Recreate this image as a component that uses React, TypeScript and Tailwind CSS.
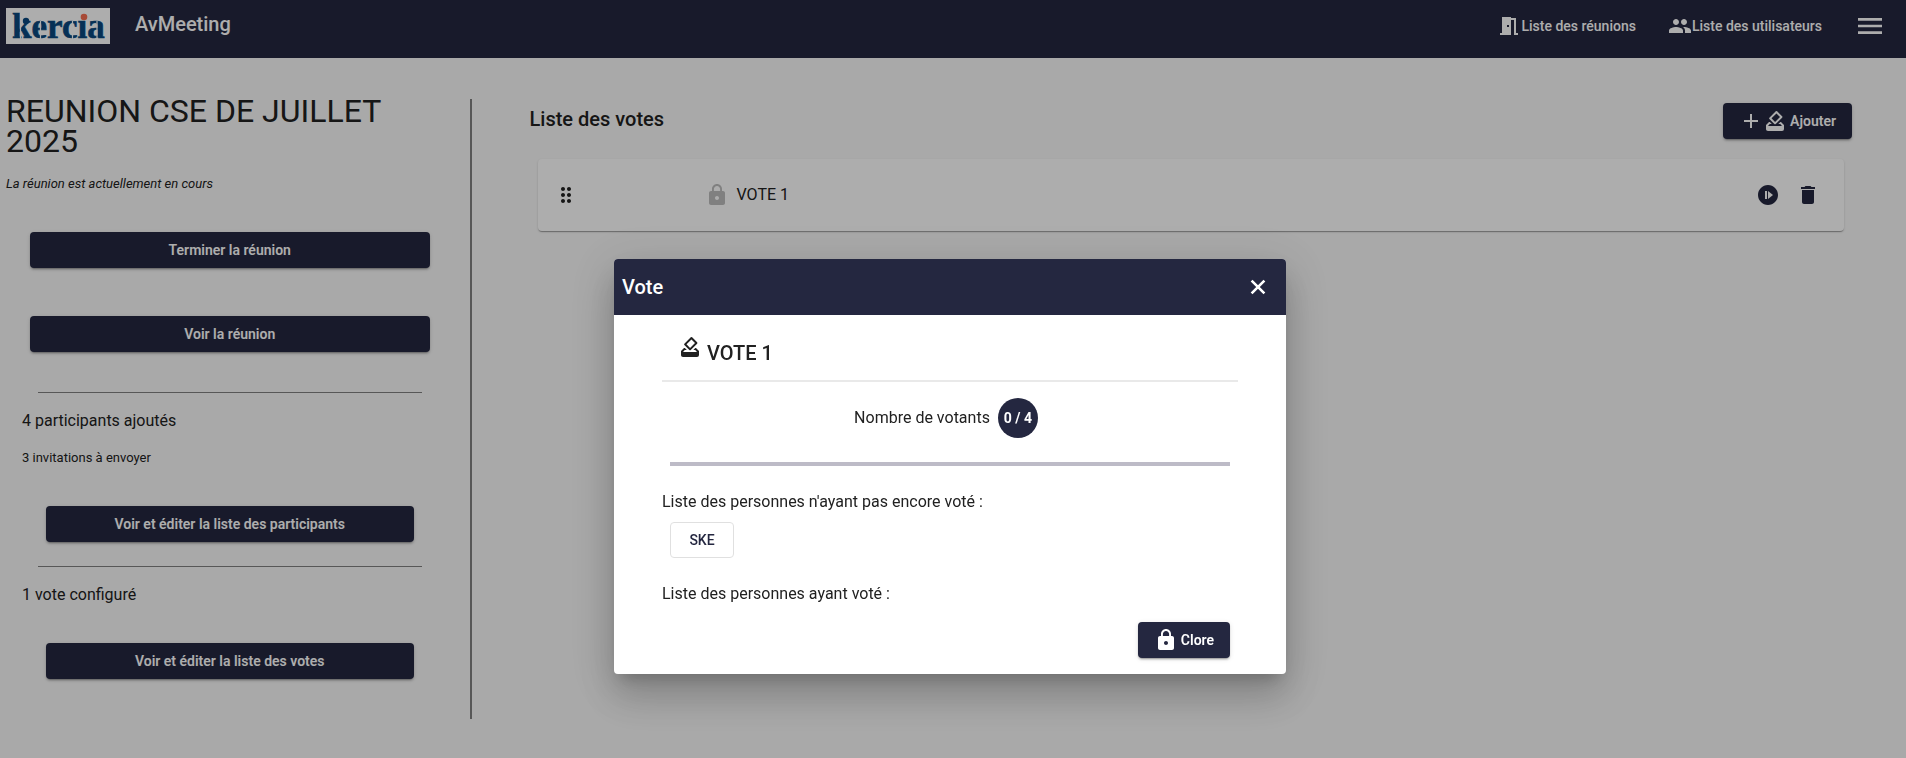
import React, { useState } from 'react';
import {
  MdAdd,
  MdDelete,
  MdDragIndicator,
  MdGroup,
  MdHowToVote,
  MdLock,
  MdMeetingRoom,
  MdMenu,
  MdNotStarted,
} from 'react-icons/md';

const votes = [{ id: 1, title: 'VOTE 1' }];
const pendingVoters = ['SKE'];

const raised =
  'h-9 rounded bg-[#242740] text-sm leading-9 font-semibold text-white shadow-[0_3px_1px_-2px_rgba(0,0,0,0.2),0_2px_2px_0_rgba(0,0,0,0.14),0_1px_5px_0_rgba(0,0,0,0.12)]';

function Logo() {
  return (
    <svg className="h-9 w-[104px] overflow-visible bg-white" viewBox="0 0 104 36" role="img" aria-label="kercia">
      <text
        x="6"
        y="30"
        fontFamily="'Liberation Serif', serif"
        fontWeight="700"
        fontSize="35"
        fill="#09487f"
        stroke="#09487f"
        strokeWidth="0.6"
      >
        kercıa
      </text>
      {/* stencil cuts */}
      <path d="M14.5 5v26M34.5 13v18M66.5 13v18M91 13v18" stroke="#fff" strokeWidth="1.2" />
      <circle cx="20" cy="13" r="3.2" fill="#09487f" />
      <circle cx="78" cy="9" r="3.3" fill="#f76d51" />
    </svg>
  );
}

function CloseIcon() {
  return (
    <svg className="size-6" viewBox="0 0 24 24" fill="none" stroke="currentColor" strokeWidth="2.6" aria-hidden="true">
      <path d="M5.6 5.6l12.8 12.8M18.4 5.6L5.6 18.4" />
    </svg>
  );
}

function Navbar() {
  return (
    <header className="flex h-[58px] items-center bg-[#242740] px-1.5 text-white">
      <div className="mb-1.5">
        <Logo />
      </div>
      <span className="mb-2.5 ml-[25px] text-xl font-medium">AvMeeting</span>
      <nav className="mb-1.5 ml-auto flex items-center text-sm font-medium">
        <a href="#reunions" className="mr-8 flex items-center">
          <MdMeetingRoom className="size-6" />
          Liste des réunions
        </a>
        <a href="#utilisateurs" className="mr-8 flex items-center">
          <MdGroup className="size-6" />
          Liste des utilisateurs
        </a>
        <button type="button" aria-label="Menu" className="mr-3.5">
          <MdMenu className="size-8" />
        </button>
      </nav>
    </header>
  );
}

function Sidebar() {
  return (
    <aside className="w-1/4 pr-[5px] pl-1.5">
      <div className="flex flex-col border-r-2 border-[#808080] pr-4 pb-10">
        <h1 className="-mt-[3px] text-[32px] leading-[30px]">REUNION CSE DE JUILLET 2025</h1>
        <p className="mt-[18px] text-[13px] leading-5 italic">La réunion est actuellement en cours</p>
        <button type="button" className={`${raised} mx-6 mt-[38px]`}>
          Terminer la réunion
        </button>
        <button type="button" className={`${raised} mx-6 mt-12`}>
          Voir la réunion
        </button>
        <hr className="mx-8 mt-10 border-[#808080]" />
        <p className="mx-4 mt-4 text-base leading-6">4 participants ajoutés</p>
        <p className="mx-4 mt-[15px] text-[13px] leading-5">3 invitations à envoyer</p>
        <button type="button" className={`${raised} mx-10 mt-[38px]`}>
          Voir et éditer la liste des participants
        </button>
        <hr className="mx-8 mt-6 border-[#808080]" />
        <p className="mx-4 mt-4 text-base leading-6">1 vote configuré</p>
        <button type="button" className={`${raised} mx-10 mt-9`}>
          Voir et éditer la liste des votes
        </button>
      </div>
    </aside>
  );
}

function VoteList() {
  return (
    <section className="flex-1 pt-1 pr-[54px] pl-[53px]">
      <div className="flex items-center justify-between">
        <h2 className="mb-1 text-xl font-medium">Liste des votes</h2>
        <button type="button" className={`${raised} flex items-center px-4`}>
          <MdAdd className="size-6" />
          <MdHowToVote className="mr-[3px] size-6" />
          Ajouter
        </button>
      </div>
      <ul className="mx-2 mt-5">
        {votes.map((vote) => (
          <li
            key={vote.id}
            className="flex h-[72px] items-center rounded bg-white px-4 shadow-[0_2px_1px_-1px_rgba(0,0,0,0.2),0_1px_1px_0_rgba(0,0,0,0.14),0_1px_3px_0_rgba(0,0,0,0.12)]"
          >
            <MdDragIndicator className="size-6" />
            <MdLock className="ml-[127px] size-6 text-[#bdbdbd]" />
            <span className="ml-2 flex-1 text-base">{vote.title}</span>
            <button type="button" aria-label="Démarrer le vote" className="mr-4 text-[#242740]">
              <MdNotStarted className="size-6" />
            </button>
            <button type="button" aria-label="Supprimer le vote" className="mr-2 text-[#242740]">
              <MdDelete className="size-6" />
            </button>
          </li>
        ))}
      </ul>
    </section>
  );
}

function VoteDialog({ onClose }: { onClose: () => void }) {
  return (
    <div className="fixed inset-0 flex items-start justify-center bg-black/32 pt-[259px] pr-1.5">
      <div
        role="dialog"
        aria-labelledby="dialog-title"
        className="w-full max-w-2xl overflow-hidden rounded bg-white shadow-[0_11px_15px_-7px_rgba(0,0,0,0.2),0_24px_38px_3px_rgba(0,0,0,0.14),0_9px_46px_8px_rgba(0,0,0,0.12)]"
      >
        <div className="flex h-14 items-center justify-between bg-[#242740] pr-4 pl-2 text-white">
          <h2 id="dialog-title" className="text-xl font-medium">
            Vote
          </h2>
          <button type="button" aria-label="Fermer" onClick={onClose}>
            <CloseIcon />
          </button>
        </div>
        <div className="px-12 pb-4">
          <h3 className="flex h-[67px] items-center border-b-2 border-[#e9e9e9] px-4 pt-2.5 text-xl font-medium">
            <MdHowToVote className="mr-[5px] mb-3 size-6" />
            VOTE 1
          </h3>
          <div className="mt-4 flex items-center justify-center gap-2 pr-2">
            <span>Nombre de votants</span>
            <span className="size-10 rounded-full bg-[#242740] text-center text-sm leading-10 font-bold text-white">
              0 / 4
            </span>
          </div>
          <div
            role="progressbar"
            aria-label="Progression du vote"
            aria-valuenow={0}
            aria-valuemax={4}
            className="mx-2 mt-6 h-1 bg-[#bdbbc7]"
          />
          <p className="mt-6 leading-6">Liste des personnes n'ayant pas encore voté :</p>
          <div className="mx-2 mt-2 flex gap-2">
            {pendingVoters.map((name) => (
              <button
                key={name}
                type="button"
                className="h-9 min-w-16 rounded border border-[#e0e0e0] px-4 text-sm font-medium text-[#242740]"
              >
                {name}
              </button>
            ))}
          </div>
          <p className="mt-6 leading-6">Liste des personnes ayant voté :</p>
          <div className="mx-2 mt-4 flex justify-end">
            <button type="button" onClick={onClose} className={`${raised} flex items-center px-4`}>
              <MdLock className="mr-[3px] size-6" />
              Clore
            </button>
          </div>
        </div>
      </div>
    </div>
  );
}

function App() {
  const [dialogOpen, setDialogOpen] = useState(true);

  return (
    <div className="min-h-screen bg-[#fafafa] font-[Roboto,sans-serif] text-[#212121]">
      <Navbar />
      <main className="flex pt-[41px]">
        <Sidebar />
        <VoteList />
      </main>
      {dialogOpen && <VoteDialog onClose={() => setDialogOpen(false)} />}
    </div>
  );
}

export default App;
